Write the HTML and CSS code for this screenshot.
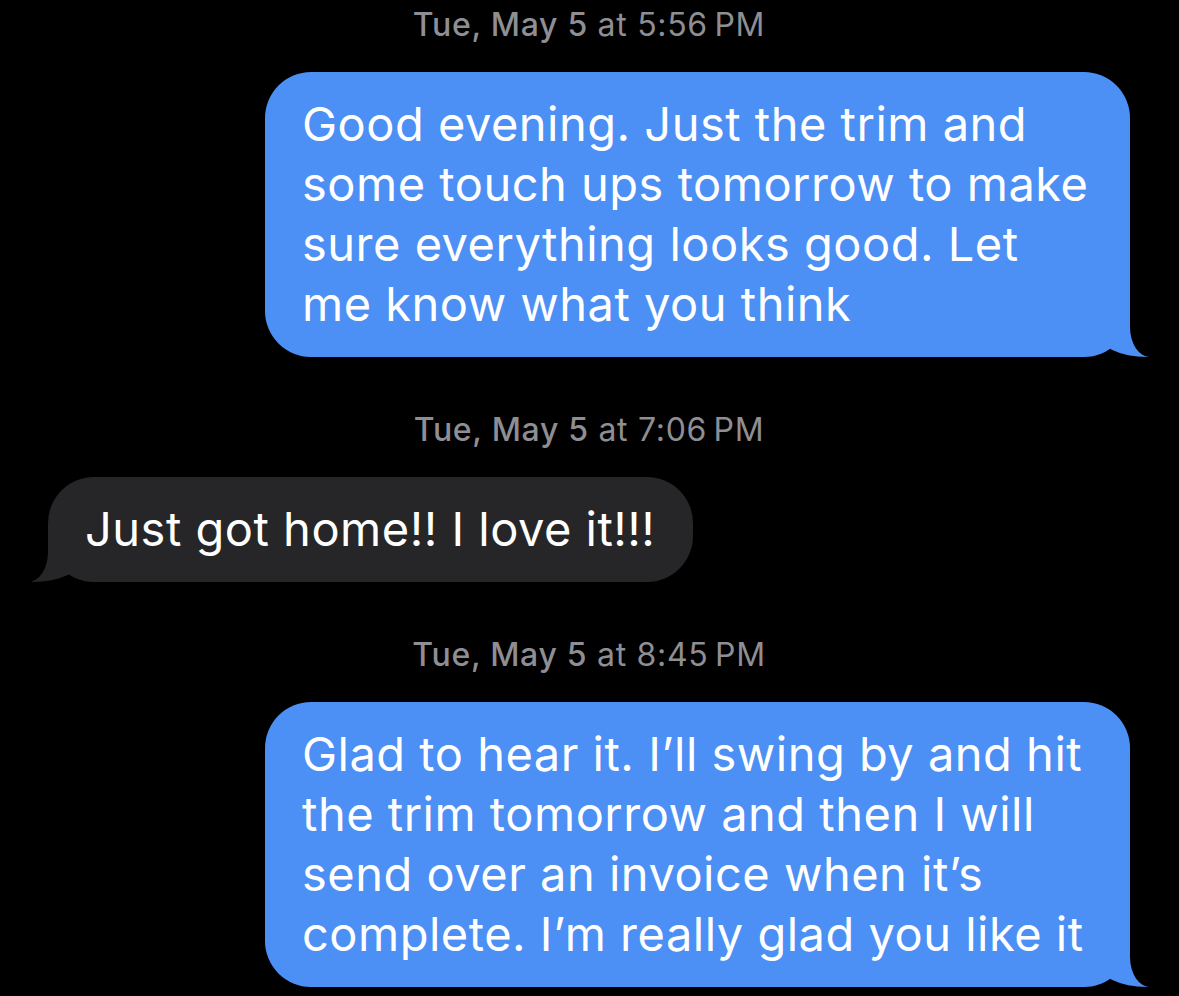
FILE: index.html
```html
<!DOCTYPE html>
<html lang="en">
<head>
  <meta charset="UTF-8" />
  <meta name="viewport" content="width=device-width, initial-scale=1.0"/>
  <title>Messages</title>
  <link rel="stylesheet" href="styles.css">
</head>
<body>
  <div class="thread">
    <p class="stamp"><strong>Tue, May 5</strong> at 5:56&#8201;PM</p>
    <div class="row row-sent">
      <div class="bubble sent">Good evening. Just the trim and some touch ups tomorrow to make sure everything looks good. Let me know what you think</div>
    </div>

    <p class="stamp"><strong>Tue, May 5</strong> at 7:06&#8201;PM</p>
    <div class="row row-received">
      <div class="bubble received">Just got home!! I love it!!!</div>
    </div>

    <p class="stamp"><strong>Tue, May 5</strong> at 8:45&#8201;PM</p>
    <div class="row row-sent">
      <div class="bubble sent">Glad to hear it. I’ll swing by and hit the trim tomorrow and then I will send over an invoice when it’s complete. I’m really glad you like it</div>
    </div>
  </div>
</body>
</html>
```

FILE: styles.css
```css
body {
  margin: 0;
  background: #000;
  color: #fff;
  font-family: Inter, "Noto Sans", sans-serif;
  overflow: hidden;
}
.thread {
  display: flex;
  flex-direction: column;
  padding: 0 49px 0 48px;
}
.stamp {
  margin: 55px 0 29px;
  text-align: center;
  font-size: 32px;
  line-height: 36px;
  letter-spacing: 0.7px;
  color: #8e8e93;
}
.stamp:first-child {
  margin-top: 7px;
}
.stamp strong {
  font-weight: 500;
}
.row {
  display: flex;
}
.row-sent {
  justify-content: flex-end;
}
.row-received {
  justify-content: flex-start;
}
.bubble {
  position: relative;
  max-width: 790px;
  padding: 22px 38px 23px 37px;
  border-radius: 46px;
  font-size: 47px;
  line-height: 60px;
  letter-spacing: 0.5px;
}
.sent {
  background: #4c8ff5;
}
.received {
  background: #262628;
}

/* tails */
.sent::before,
.sent::after,
.received::before,
.received::after {
  content: "";
  position: absolute;
  bottom: 0;
  width: 50px;
  height: 50px;
}
.sent::before {
  right: -18px;
  background: #4c8ff5;
  border-bottom-left-radius: 49px 24px;
}
.sent::after {
  right: -50px;
  background: #000;
  border-bottom-left-radius: 20px 30px;
}
.received::before {
  left: -16px;
  background: #262628;
  border-bottom-right-radius: 49px 24px;
}
.received::after {
  left: -50px;
  background: #000;
  border-bottom-right-radius: 20px 30px;
}
```
